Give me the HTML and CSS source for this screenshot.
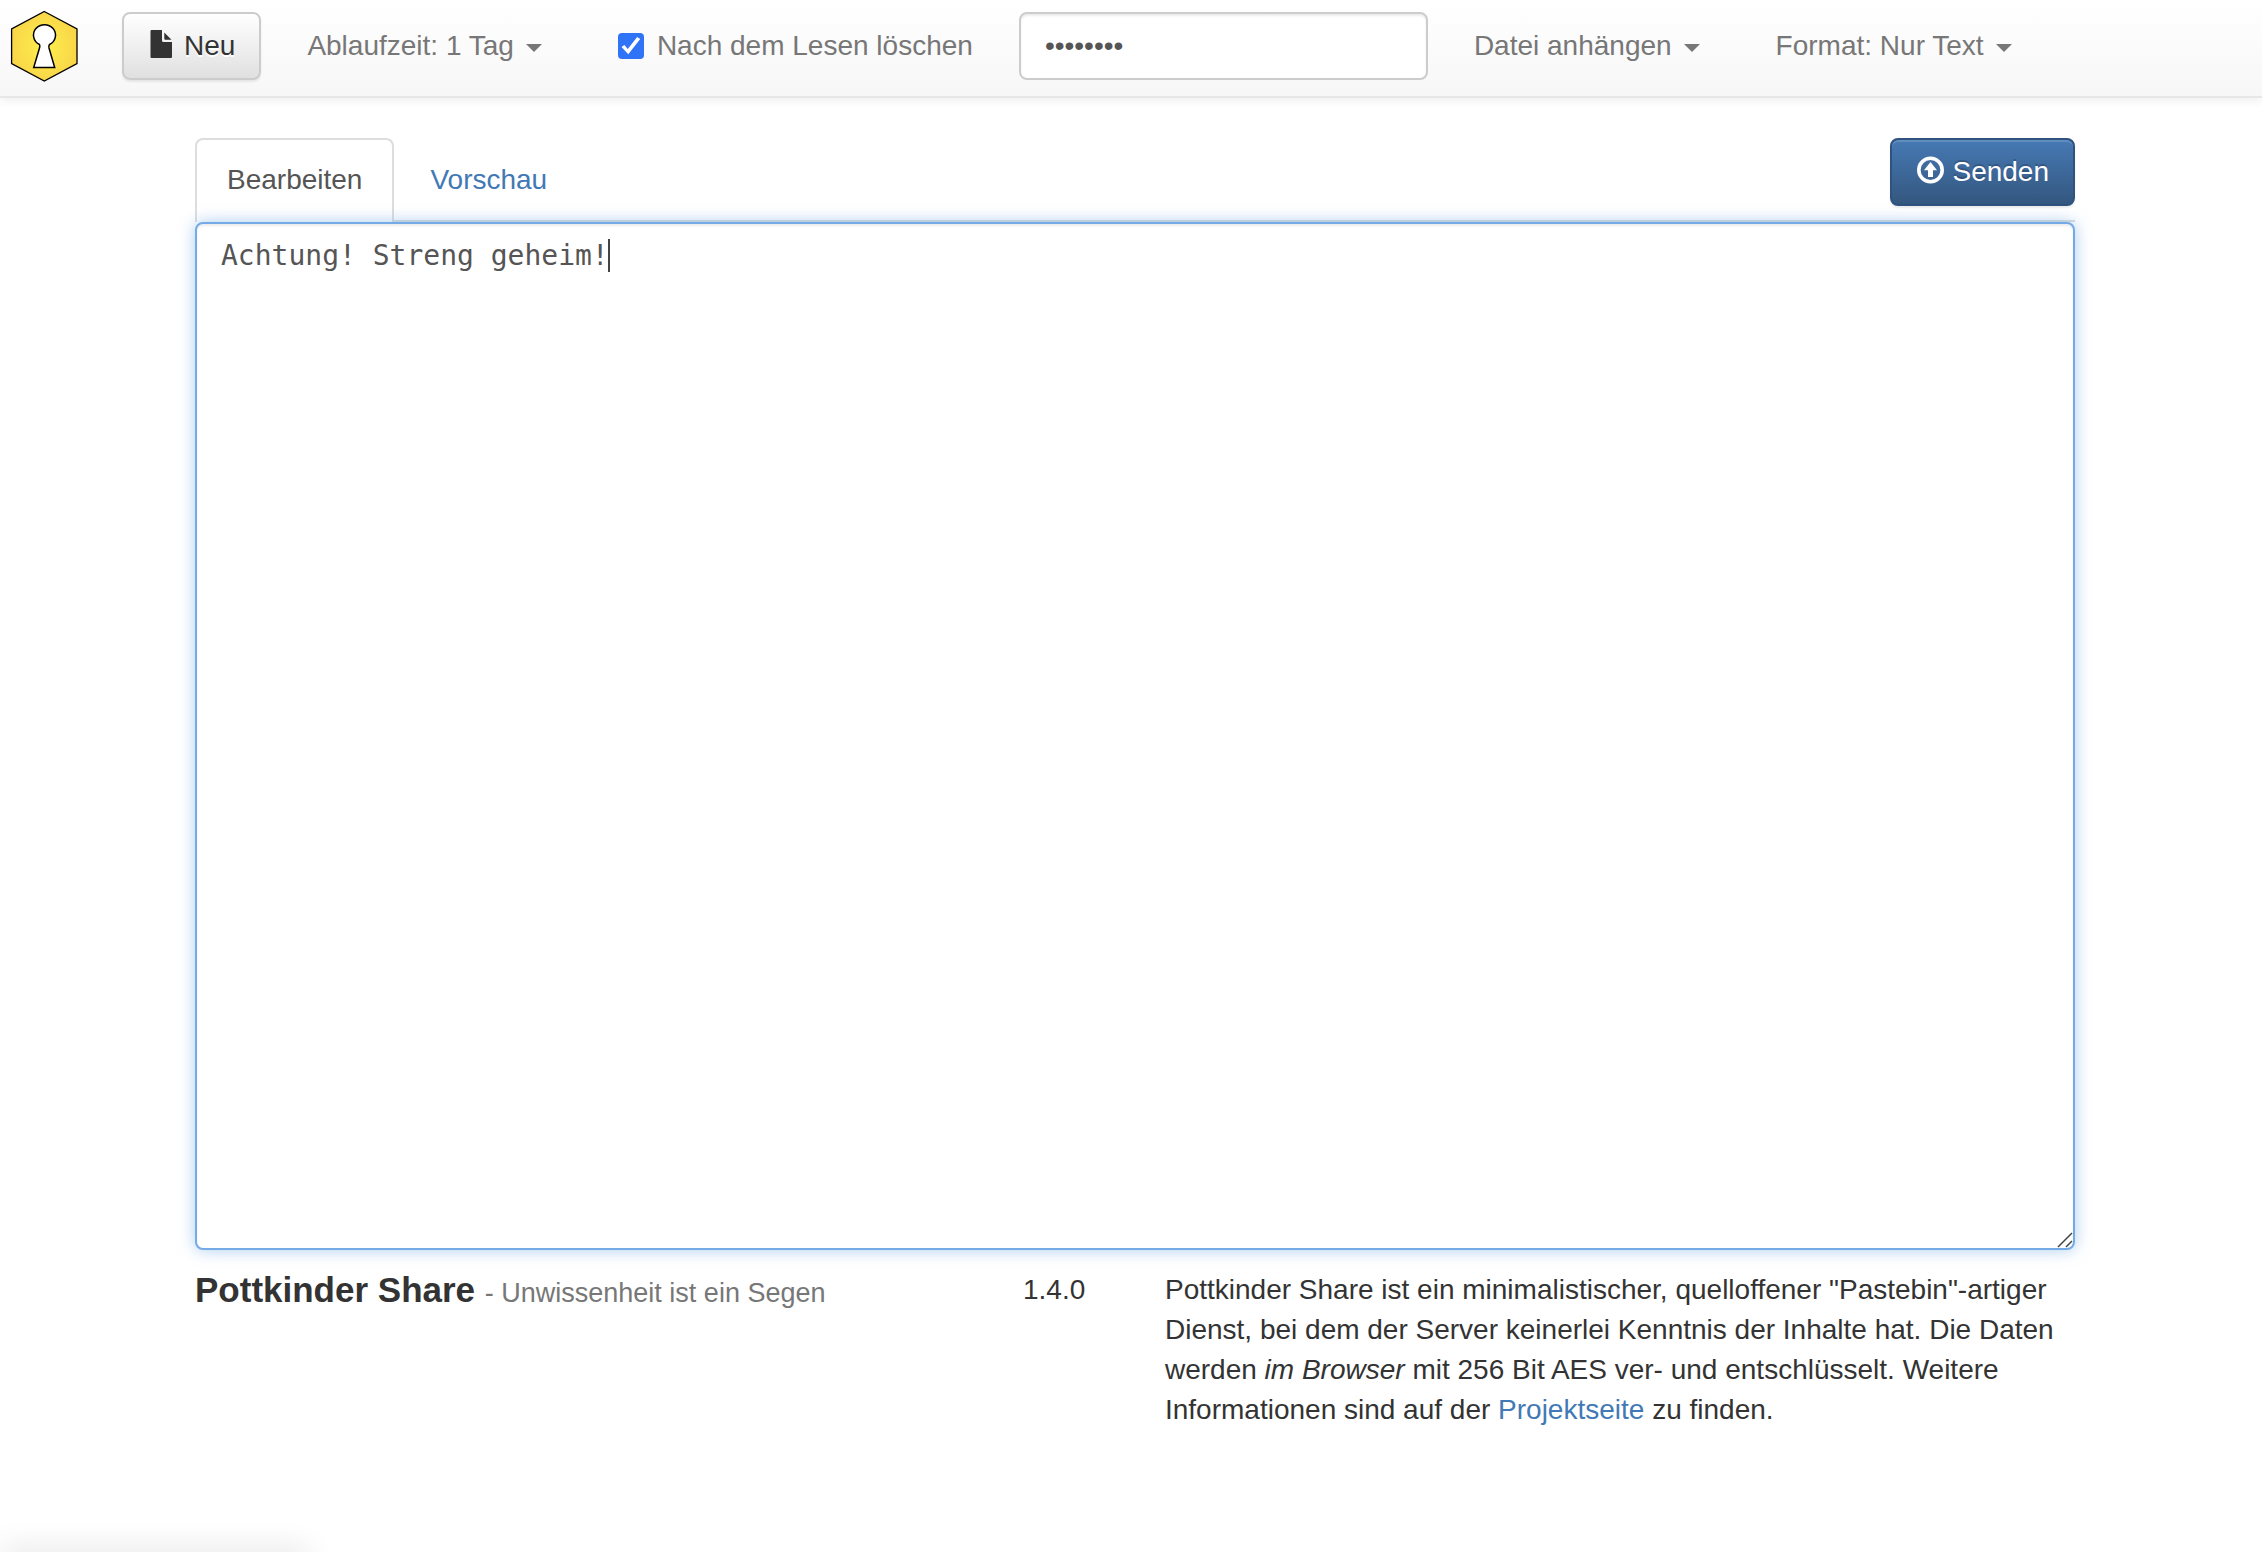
FILE: index.html
```html
<!DOCTYPE html>
<html lang="de">
<head>
<meta charset="utf-8">
<meta name="viewport" content="width=device-width, initial-scale=1">
<title>Pottkinder Share</title>
<link rel="stylesheet" href="styles.css">
</head>
<body>
<nav class="navbar">
  <a class="brand" href="#" aria-label="Pottkinder Share">
    <svg class="logo" viewBox="0 0 68 72" aria-hidden="true">
      <defs>
        <radialGradient id="gold" cx="50%" cy="50%" r="50%">
          <stop offset="0" stop-color="#fdf04e"/>
          <stop offset="1" stop-color="#f9d648"/>
        </radialGradient>
      </defs>
      <path d="M34.3 1.5 67 19v34.500L34.300 71 1.600 53.500V19z" fill="url(#gold)" stroke="#000" stroke-width="1.300"/>
      <path d="M29.500 34.500A11 10.500 0 1 1 39.500 34.500Q38.500 36 39 38L44.700 57.500H23.700L29.500 38Q30.200 36 29.500 34.500z" fill="#fff" stroke="#000" stroke-width="1.500"/>
    </svg>
  </a>
  <button class="btn btn-default" type="button">
    <svg class="icon" viewBox="0 0 28 28" aria-hidden="true"><path d="M3.500 0H14v10.500q0 1.500 1.500 1.500H24v15q0 1-1 1H3.500q-1 0-1-1V1q0-1 1-1zM16.300 2.500 23.500 9.800h-6.200q-1 0-1-1z" fill="#333"/></svg>
    <span>Neu</span>
  </button>
  <button class="nav-link" type="button">Ablaufzeit: 1 Tag<span class="caret"></span></button>
  <label class="nav-check"><input class="checkbox" type="checkbox" checked>Nach dem Lesen löschen</label>
  <input class="password" type="password" value="geheim12" aria-label="Passwort">
  <button class="nav-link" type="button">Datei anhängen<span class="caret"></span></button>
  <button class="nav-link" type="button">Format: Nur Text<span class="caret"></span></button>
</nav>

<div class="page">
  <main>
    <div class="toolbar">
      <div class="tabs">
        <a class="tab tab-active" href="#">Bearbeiten</a>
        <a class="tab" href="#">Vorschau</a>
      </div>
      <button class="btn btn-primary" type="button">
        <svg class="icon" viewBox="0 0 28 28" aria-hidden="true"><circle cx="14.500" cy="14" r="11.700" fill="none" stroke="#fff" stroke-width="3.600"/><path d="M14.500 6 21 14.200h-4V21h-5v-6.800H8z" fill="#fff"/></svg>
        <span>Senden</span>
      </button>
    </div>
    <div class="editor">
      <textarea class="message" rows="25" spellcheck="false" aria-label="Nachricht">Achtung! Streng geheim!</textarea>
      <span class="cursor"></span>
      <svg class="grip" viewBox="0 0 16 16" aria-hidden="true"><path d="M1 15 15 1M9 15l6-6" stroke="#444" stroke-width="1.500"/></svg>
    </div>
  </main>
  <footer class="footer">
    <h4 class="title">Pottkinder Share <small>- Unwissenheit ist ein Segen</small></h4>
    <p class="version">1.4.0</p>
    <p class="about">Pottkinder Share ist ein minimalistischer, quelloffener "Pastebin"-artiger Dienst, bei dem der Server keinerlei Kenntnis der Inhalte hat. Die Daten werden <i>im Browser</i> mit 256 Bit AES ver- und entschlüsselt. Weitere Informationen sind auf der <a href="#">Projektseite</a> zu finden.</p>
  </footer>
</div>
<div class="status-shadow"></div>
</body>
</html>
```

FILE: styles.css
```css
*, *::before { box-sizing: border-box; }

body {
  margin: 0;
  background: #fff;
  color: #333;
  font: 28px/40px "Liberation Sans", Arial, sans-serif;
}

button, input, textarea { font: inherit; }
a { color: #4279b5; text-decoration: none; }

.navbar {
  display: flex;
  align-items: center;
  gap: 16px;
  padding: 10px 10px 14px;
  border-bottom: 2px solid #e7e7e7;
  background: linear-gradient(#fff, #f7f7f7);
  box-shadow: 0 2px 10px rgba(0, 0, 0, .075);
}

.brand { display: flex; margin-right: 28px; }
.logo { width: 68px; height: 72px; }

.btn {
  display: flex;
  align-items: flex-start;
  gap: 8px;
  padding: 12px 24px;
  border: 2px solid;
  border-radius: 8px;
}
.btn-default {
  border-color: #ccc;
  background: linear-gradient(#fff, #e0e0e0);
  color: #333;
  text-shadow: 0 2px 0 #fff;
  box-shadow: inset 0 2px 0 rgba(255, 255, 255, .15), 0 2px 2px rgba(0, 0, 0, .075);
}
.btn-primary {
  border-color: #2f527f;
  background: linear-gradient(#4679b4, #34577f);
  color: #fff;
  text-shadow: 0 -2px 0 rgba(0, 0, 0, .2);
  box-shadow: inset 0 2px 0 rgba(255, 255, 255, .15), 0 2px 2px rgba(0, 0, 0, .075);
}
.icon { width: 28px; height: 28px; margin-top: 4px; }

.nav-link {
  display: flex;
  align-items: center;
  gap: 12px;
  padding: 0 30px;
  border: 0;
  background: none;
  color: #777;
  white-space: nowrap;
}
.caret {
  border: 8px solid transparent;
  border-top-color: #777;
  border-bottom: 0;
  margin-top: 4px;
}

.nav-check {
  display: flex;
  align-items: center;
  gap: 13px;
  padding: 0 30px;
  color: #777;
  white-space: nowrap;
}
.checkbox {
  appearance: none;
  width: 26px;
  height: 26px;
  margin: 0;
  border-radius: 4px;
  background: #2f73f6;
}
.checkbox:checked::before {
  content: "";
  display: block;
  height: 100%;
  background: #fff;
  clip-path: polygon(14% 54%, 25% 46%, 38% 62%, 74% 15%, 86% 23%, 40% 82%);
}

.password {
  width: 409px;
  height: 68px;
  padding: 12px 24px;
  border: 2px solid #ccc;
  border-radius: 8px;
  background: #fff;
  color: #555;
  box-shadow: inset 0 2px 2px rgba(0, 0, 0, .075);
}

.page {
  max-width: 1888px;
  margin: 0 auto;
  padding: 40px 0 40px 8px;
}

.toolbar {
  display: flex;
  align-items: flex-start;
  justify-content: space-between;
  border-bottom: 2px solid #ddd;
}
.tabs { display: flex; gap: 4px; }
.tab {
  padding: 20px 30px;
  border: 2px solid transparent;
  border-bottom: 0;
  border-radius: 8px 8px 0 0;
}
.tab-active {
  margin-bottom: -2px;
  padding-bottom: 22px;
  border-color: #ddd;
  background: #fff;
  color: #555;
}

.editor { position: relative; }
.message {
  display: block;
  width: 100%;
  padding: 12px 24px;
  border: 2px solid #74aae6;
  border-radius: 8px;
  outline: 0;
  resize: none;
  background: #fff;
  color: #555;
  font-family: "DejaVu Sans Mono", monospace;
  box-shadow: inset 0 2px 2px rgba(0, 0, 0, .075), 0 0 16px rgba(116, 170, 230, .6);
}
.cursor {
  position: absolute;
  top: 17px;
  left: 413px;
  width: 2px;
  height: 33px;
  background: #444;
}
.grip {
  position: absolute;
  right: 2px;
  bottom: 2px;
  width: 16px;
  height: 16px;
}

.footer {
  display: grid;
  grid-template-columns: repeat(12, 1fr);
  column-gap: 60px;
  padding-top: 20px;
}
.footer > * { margin: 0; }
.title { grid-column: span 5; font-size: 35px; }
.title small { color: #777; font-size: 27px; font-weight: 400; }
.version { text-align: center; }
.about { grid-column: span 6; }

.status-shadow {
  position: fixed;
  bottom: -10px;
  left: 0;
  width: 310px;
  height: 10px;
  border-radius: 0 8px 0 0;
  box-shadow: 0 0 30px rgba(0, 0, 0, .2);
}
```
